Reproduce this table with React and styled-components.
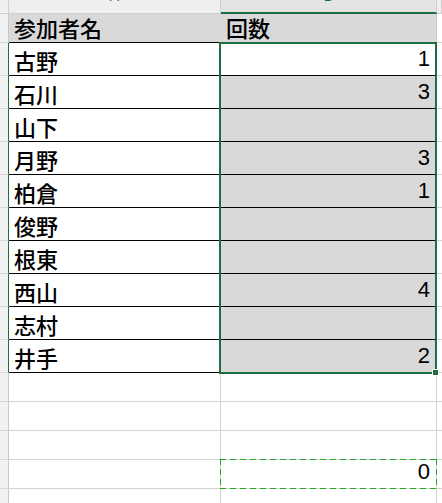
import React from "react";
import styled, { createGlobalStyle, css } from "styled-components";

const GlobalStyle = createGlobalStyle`
  html, body {
    margin: 0;
    padding: 0;
    background: #ffffff;
    overflow: hidden;
  }
`;

const GREEN = "#1f6d42";
const GRID = "#d2d2d2";

const tracks = css`
  display: grid;
  grid-template-columns: 9px 212px 216px 5px;
  grid-template-rows: 14px 29px repeat(10, 33px) repeat(5, 29px);
`;

const Wrap = styled.div`
  position: relative;
  width: 442px;
  height: 503px;
  overflow: hidden;
`;

const Sheet = styled.div`
  ${tracks}
  font-family: "Noto Sans CJK JP", "Noto Sans", sans-serif;
  color: #000;
`;

// overlay layer sharing the same tracks, for selection / copy marquee
const Overlay = styled.div`
  ${tracks}
  position: absolute;
  inset: 0;
  pointer-events: none;
`;

const ColHead = styled.div`
  background: ${(p) => (p.$selected ? "#e4e4e4" : "#efefef")};
  border-right: 1px solid #cfcfcf;
  border-bottom: ${(p) => (p.$selected ? `2px solid ${GREEN}` : "1px solid #cfcfcf")};
  overflow: hidden;
  display: flex;
  justify-content: center;

  span {
    margin-top: -11px;
    font-family: "Liberation Sans", sans-serif;
    font-size: 14px;
    line-height: 14px;
    color: ${(p) => (p.$selected ? GREEN : "#555")};
  }
`;

const RowHead = styled.div`
  background: #f1f1f1;
  border-right: 1px solid ${(p) => (p.$selected ? GREEN : "#c9c9c9")};
  border-bottom: 1px solid #d6d6d6;
`;

const Cell = styled.div`
  display: flex;
  align-items: flex-end;
  padding: 0 6px 1px 5px;
  background: ${(p) => p.$bg || "#fff"};
  border-right: 1px solid ${(p) => p.$right || GRID};
  border-bottom: 1px solid ${(p) => p.$bottom || GRID};
  justify-content: ${(p) => (p.$num ? "flex-end" : "flex-start")};
  font-size: 22px;
  font-weight: 500;
  line-height: 28px;
  ${(p) =>
    p.$num &&
    css`
      font-family: "Liberation Sans", sans-serif;
      font-weight: 400;
      font-size: 22px;
      padding: 0 6px 3px 5px;
      line-height: 26px;
    `}
`;

const Filler = styled.div`
  border-bottom: 1px solid ${(p) => p.$line || GRID};
  background: ${(p) => p.$bg || "#fff"};
`;

const Selection = styled.div`
  grid-column: 3;
  grid-row: 3 / 13;
  margin: -1px 0 -1px -2px;
  border: 2px solid ${GREEN};
  position: relative;
`;

const FillHandle = styled.div`
  position: absolute;
  right: -3px;
  bottom: -3px;
  width: 5px;
  height: 5px;
  background: ${GREEN};
  outline: 1px solid #fff;
`;

const dash = "#24a524";

const CopyMarquee = styled.div`
  grid-column: 3;
  grid-row: 16;
  margin: -1px 0 0 -1px;
  background:
    repeating-linear-gradient(90deg, ${dash} 0 6px, transparent 6px 10px) top / 100% 1px no-repeat,
    repeating-linear-gradient(90deg, ${dash} 0 6px, transparent 6px 10px) bottom / 100% 1px no-repeat,
    repeating-linear-gradient(180deg, ${dash} 0 6px, transparent 6px 10px) left / 1px 100% no-repeat,
    repeating-linear-gradient(180deg, ${dash} 0 6px, transparent 6px 10px) right / 1px 100% no-repeat;
`;

const rows = [
  ["古野", 1],
  ["石川", 3],
  ["山下", null],
  ["月野", 3],
  ["柏倉", 1],
  ["俊野", null],
  ["根東", null],
  ["西山", 4],
  ["志村", null],
  ["井手", 2],
];

export default function App() {
  return (
    <>
      <GlobalStyle />
      <Wrap>
        <Sheet>
          <ColHead />
          <ColHead>
            <span>A</span>
          </ColHead>
          <ColHead $selected>
            <span>B</span>
          </ColHead>
          <ColHead />

          <RowHead />
          <Cell $bg="#d9d9d9" $bottom="#000" $right="#d9d9d9">参加者名</Cell>
          <Cell $bg="#d9d9d9" $bottom="#000" $right="#c8c8c8">回数</Cell>
          <Filler />

          {rows.map(([name, count], i) => (
            <React.Fragment key={name}>
              <RowHead $selected />
              <Cell $bottom="#000" $right="#000">{name}</Cell>
              <Cell $num $bg={i === 0 ? "#fff" : "#d9d9d9"} $bottom="#000" $right={GRID}>
                {count}
              </Cell>
              <Filler />
            </React.Fragment>
          ))}

          {[0, 1, 2, 3, 4].map((i) => (
            <React.Fragment key={i}>
              <RowHead />
              <Cell />
              <Cell $num>{i === 3 ? 0 : null}</Cell>
              <Filler />
            </React.Fragment>
          ))}
        </Sheet>

        <Overlay>
          <Selection>
            <FillHandle />
          </Selection>
          <CopyMarquee />
        </Overlay>
      </Wrap>
    </>
  );
}
